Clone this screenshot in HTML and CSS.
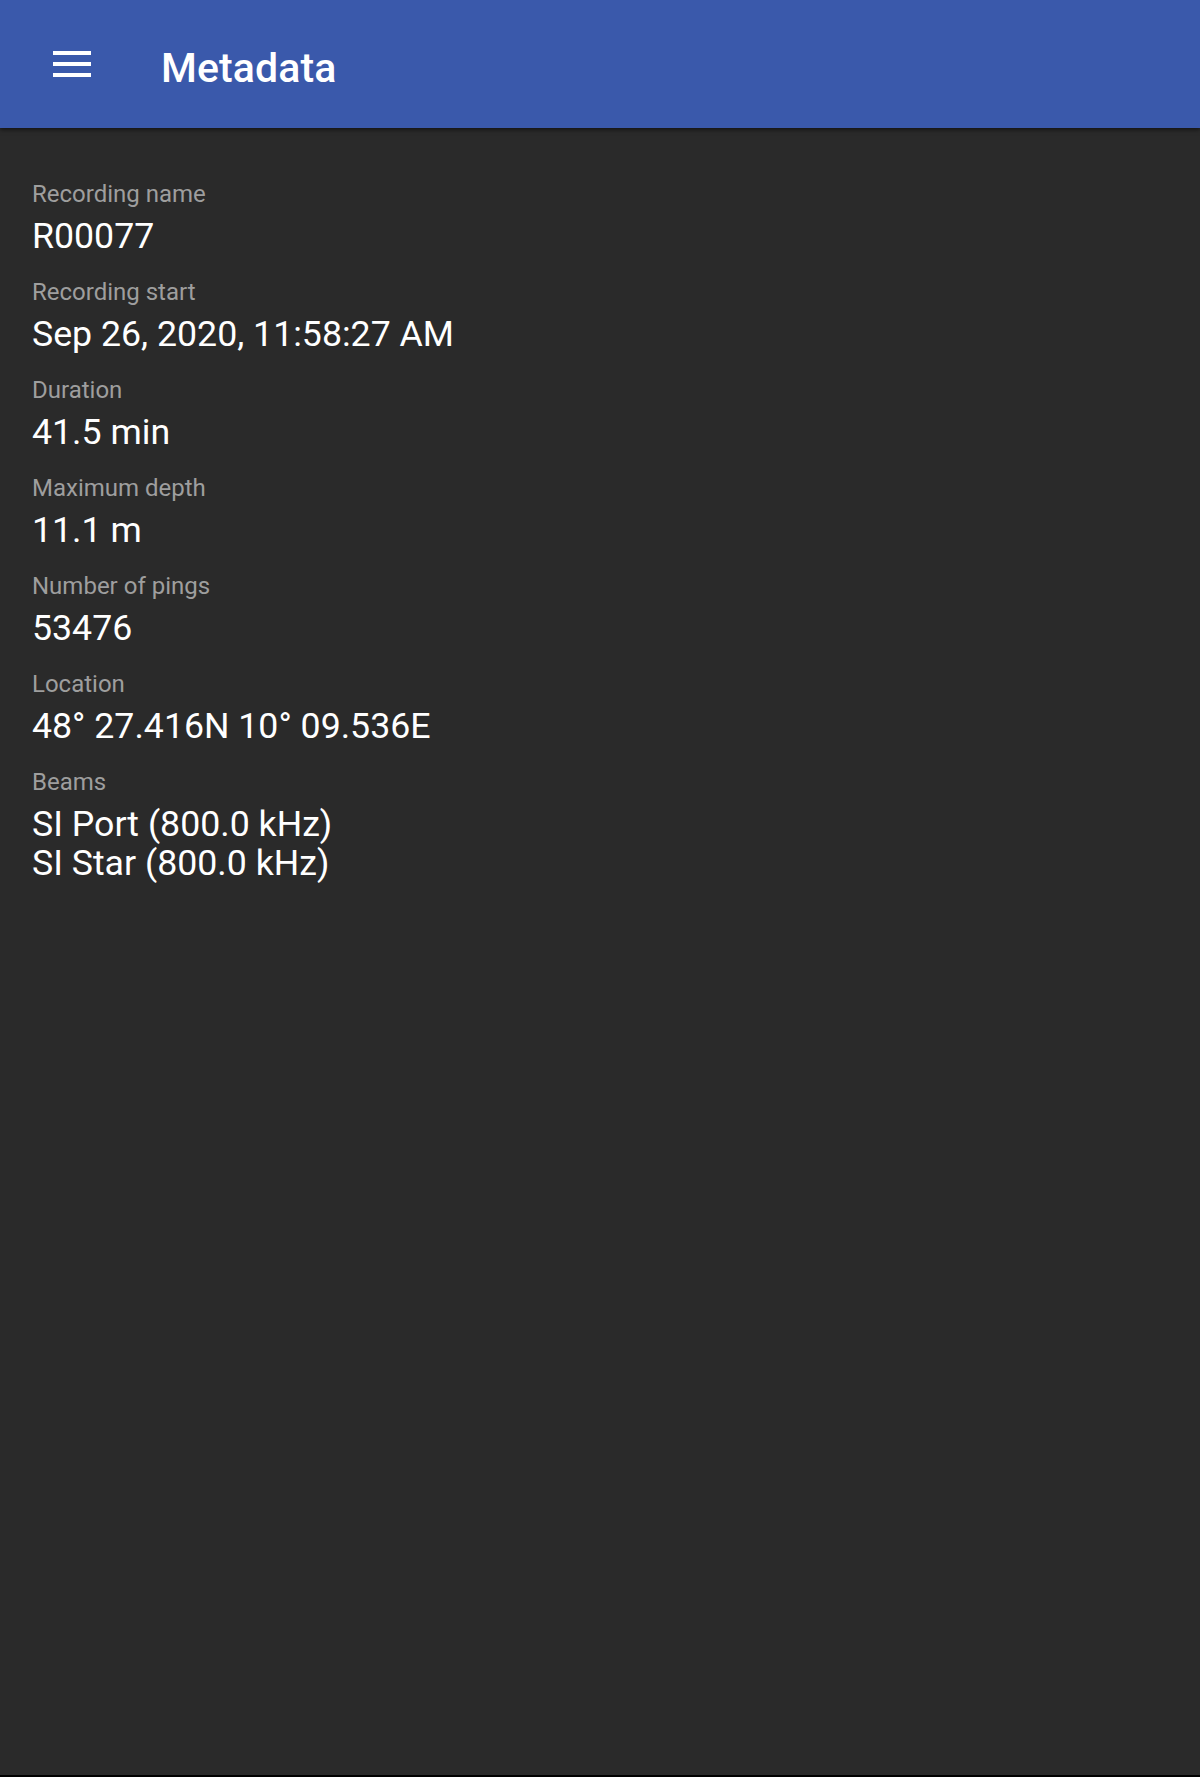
FILE: index.html
```html
<!DOCTYPE html>
<html lang="en">
<head>
    <meta charset="UTF-8">
    <meta name="viewport" content="width=device-width, initial-scale=1.0">
    <title>Metadata</title>
    <link rel="stylesheet" href="styles.css">
</head>
<body>
    <header class="app-bar">
        <button class="menu-btn" aria-label="Menu">
            <svg width="38" height="26" viewBox="0 0 38 26">
                <rect x="0" y="0" width="38" height="4" fill="#fff"/>
                <rect x="0" y="11" width="38" height="4" fill="#fff"/>
                <rect x="0" y="22" width="38" height="4" fill="#fff"/>
            </svg>
        </button>
        <h1 class="app-title">Metadata</h1>
    </header>

    <main class="meta-list">
        <div class="meta-item">
            <div class="meta-label">Recording name</div>
            <div class="meta-value">R00077</div>
        </div>
        <div class="meta-item">
            <div class="meta-label">Recording start</div>
            <div class="meta-value">Sep 26, 2020, 11:58:27 AM</div>
        </div>
        <div class="meta-item">
            <div class="meta-label">Duration</div>
            <div class="meta-value">41.5 min</div>
        </div>
        <div class="meta-item">
            <div class="meta-label">Maximum depth</div>
            <div class="meta-value">11.1 m</div>
        </div>
        <div class="meta-item">
            <div class="meta-label">Number of pings</div>
            <div class="meta-value">53476</div>
        </div>
        <div class="meta-item">
            <div class="meta-label">Location</div>
            <div class="meta-value">48° 27.416N 10° 09.536E</div>
        </div>
        <div class="meta-item">
            <div class="meta-label">Beams</div>
            <div class="meta-value">SI Port (800.0 kHz)<br>SI Star (800.0 kHz)</div>
        </div>
    </main>
</body>
</html>
```

FILE: styles.css
```css
html, body {
    height: 100%;
}

body {
    margin: 0;
    font-family: 'Roboto', 'Liberation Sans', sans-serif;
    background-color: #2a2a2a;
    color: #fff;
    display: flex;
    flex-direction: column;
    box-sizing: border-box;
    border-bottom: 2px solid #000;
}

.app-bar {
    height: 128px;
    flex-shrink: 0;
    background-color: #3a59ab;
    display: flex;
    align-items: center;
    padding-left: 53px;
    box-shadow: 0 2px 4px rgba(0, 0, 0, 0.5);
    position: relative;
    z-index: 1;
}

.menu-btn {
    background: none;
    border: none;
    padding: 0;
    width: 38px;
    height: 26px;
    display: flex;
    cursor: pointer;
}

.app-title {
    margin: 7px 0 0 70px;
    font-size: 41px;
    line-height: 40px;
    font-weight: 500;
    letter-spacing: 0.1px;
}

.meta-list {
    flex: 1;
    padding: 52px 32px 0;
    display: flex;
    flex-direction: column;
    gap: 22px;
}

.meta-label {
    font-size: 24px;
    line-height: 28px;
    color: #9e9e9e;
}

.meta-value {
    margin-top: 9px;
    font-size: 35.7px;
    line-height: 39px;
}
```
